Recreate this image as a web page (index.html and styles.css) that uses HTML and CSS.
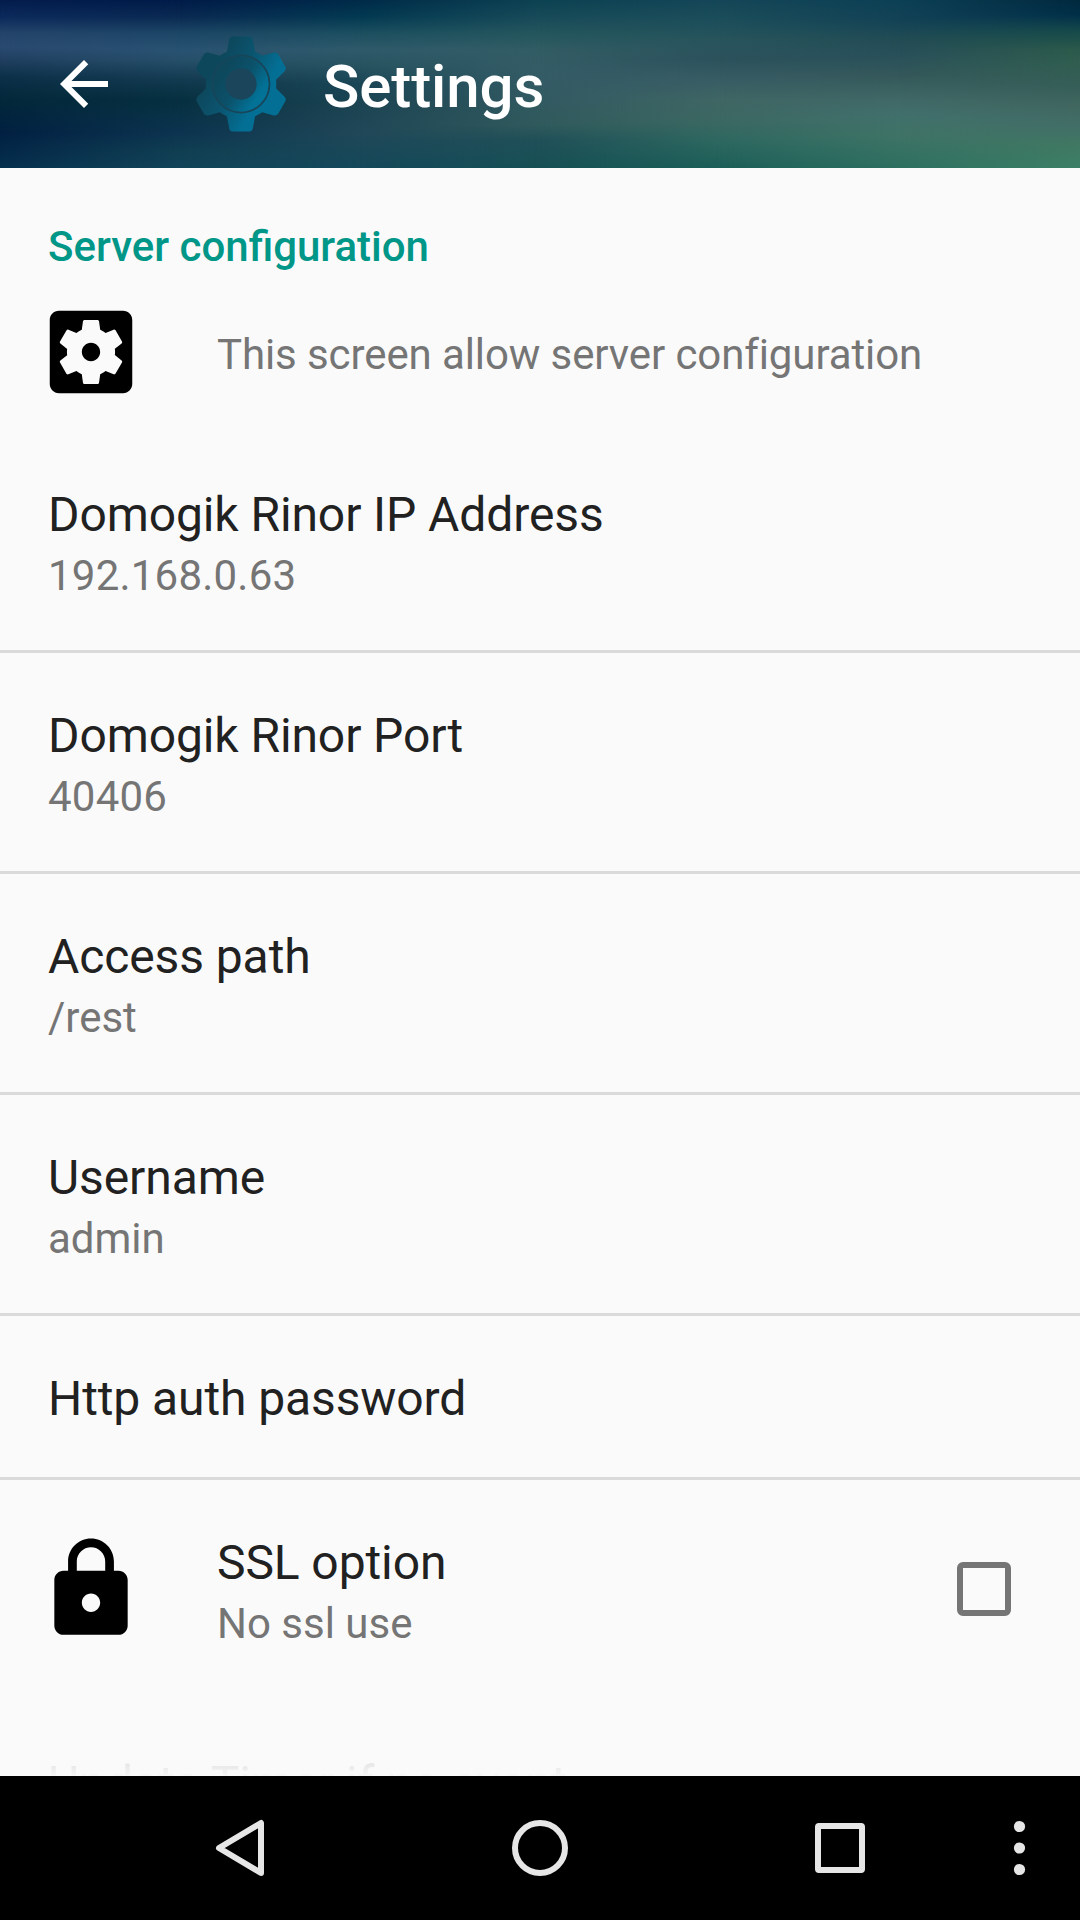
FILE: index.html
```
<!DOCTYPE html>
<html lang="en">
<head>
<meta charset="utf-8">
<title>Settings</title>
<link rel="stylesheet" href="styles.css">
</head>
<body>
<div class="screen">
  <header class="app-bar">
    <div class="aurora"><i class="band b0"></i><i class="band b1"></i><i class="band b2"></i><i class="band b3"></i><i class="band b4"></i><i class="band b5"></i><i class="band b6"></i></div>
    <svg class="back" viewBox="0 0 24 24"><path fill="#fff" d="M20 11H7.83l5.59-5.59L12 4l-8 8 8 8 1.41-1.41L7.83 13H20z"/></svg>
    <svg class="gear" viewBox="-50 -50 100 100">
      <defs>
        <linearGradient id="body" gradientUnits="userSpaceOnUse" x1="-28" y1="-16" x2="20" y2="12">
          <stop offset="0" stop-color="#0d475c"/><stop offset=".5" stop-color="#0b5570"/><stop offset="1" stop-color="#036f94"/>
        </linearGradient>
        <linearGradient id="ring" gradientUnits="userSpaceOnUse" x1="-18" y1="-12" x2="18" y2="12">
          <stop offset="0" stop-color="#0d485d"/><stop offset=".5" stop-color="#0b526b"/><stop offset="1" stop-color="#027297"/>
        </linearGradient>
        <clipPath id="cog">
          <circle r="36"/>
          <path d="M-15-30L-12-45.500Q-11.500-48.500-8.500-48.500H8.500Q11.500-48.500 12-45.500L15-30z"/>
          <path transform="rotate(60)" d="M-15-30L-11-45Q-10-48-7-48H7Q10-48 11-45L15-30z"/>
          <path transform="rotate(120)" d="M-15-30L-11-45Q-10-48-7-48H7Q10-48 11-45L15-30z"/>
          <path transform="rotate(180)" d="M-15-30L-12-45.500Q-11.500-48.500-8.500-48.500H8.500Q11.500-48.500 12-45.500L15-30z"/>
          <path transform="rotate(240)" d="M-15-30L-11-45Q-10-48-7-48H7Q10-48 11-45L15-30z"/>
          <path transform="rotate(300)" d="M-15-30L-11-45Q-10-48-7-48H7Q10-48 11-45L15-30z"/>
        </clipPath>
      </defs>
      <rect x="-50" y="-50" width="100" height="100" fill="url(#body)" clip-path="url(#cog)"/>
      <circle r="29" fill="none" stroke="#174559" stroke-width="2"/>
      <circle r="22" fill="none" stroke="url(#ring)" stroke-width="12"/>
      <circle r="16" fill="#1a455a"/>
    </svg>
    <h1 class="title">Settings</h1>
  </header>

  <main class="list">
    <h2 class="category">Server configuration</h2>
    <div class="row info">
      <svg class="icon" viewBox="0 0 24 24"><path fill-rule="evenodd" d="M12 10c-1.1 0-2 .9-2 2s.9 2 2 2 2-.9 2-2-.9-2-2-2zm7-7H5c-1.11 0-2 .9-2 2v14c0 1.1.89 2 2 2h14c1.11 0 2-.9 2-2V5c0-1.1-.89-2-2-2zm-1.75 9c0 .23-.02.46-.05.68l1.48 1.16c.13.11.17.3.08.45l-1.4 2.42c-.09.15-.27.21-.43.15l-1.74-.7c-.36.28-.76.51-1.18.69l-.26 1.85c-.03.17-.18.3-.35.3h-2.8c-.17 0-.32-.13-.35-.29l-.26-1.85c-.43-.18-.82-.41-1.18-.69l-1.74.7c-.16.06-.34 0-.43-.15l-1.4-2.42c-.09-.15-.05-.34.08-.45l1.48-1.16c-.03-.23-.05-.46-.05-.69 0-.23.02-.46.05-.68l-1.48-1.16c-.13-.11-.17-.3-.08-.45l1.4-2.42c.09-.15.27-.21.43-.15l1.74.7c.36-.28.76-.51 1.18-.69l.26-1.85c.03-.17.18-.3.35-.3h2.8c.17 0 .32.13.35.29l.26 1.85c.43.18.82.41 1.18.69l1.74-.7c.16-.06.34 0 .43.15l1.4 2.42c.09.15.05.34-.08.45l-1.48 1.16c.03.23.05.46.05.69z"/></svg>
      <p class="summary">This screen allow server configuration</p>
    </div>
    <div class="row"><div><p class="name">Domogik Rinor IP Address</p><p class="summary numeric">192.168.0.63</p></div></div>
    <div class="row"><div><p class="name">Domogik Rinor Port</p><p class="summary numeric">40406</p></div></div>
    <div class="row"><div><p class="name">Access path</p><p class="summary">/rest</p></div></div>
    <div class="row"><div><p class="name">Username</p><p class="summary">admin</p></div></div>
    <div class="row short"><div><p class="name">Http auth password</p></div></div>
    <div class="row last">
      <svg class="icon lock" viewBox="0 0 24 24"><path fill-rule="evenodd" d="M18 8h-1V6c0-2.76-2.24-5-5-5S7 3.24 7 6v2H6c-1.1 0-2 .9-2 2v10c0 1.1.9 2 2 2h12c1.1 0 2-.9 2-2V10c0-1.1-.9-2-2-2zM12 17c-1.1 0-2-.9-2-2s.9-2 2-2 2 .9 2 2-.9 2-2 2zM15.1 8H8.9V6c0-1.71 1.39-3.1 3.1-3.1s3.1 1.39 3.1 3.1z"/></svg>
      <div class="grow"><p class="name">SSL option</p><p class="summary">No ssl use</p></div>
      <span class="checkbox"></span>
    </div>
    <div class="row fading"><p class="name">Update Timer if no event</p></div>
  </main>

  <nav class="nav-bar">
    <svg viewBox="0 0 1080 144" fill="none" stroke="#e6e6e6" stroke-width="6" stroke-linejoin="round">
      <path d="M219 72L261 47V97z"/>
      <circle cx="540" cy="72" r="25"/>
      <rect x="818" y="50" width="44" height="44" rx="1"/>
      <g fill="#e6e6e6" stroke="none"><circle cx="1019.5" cy="50.500" r="5.600"/><circle cx="1019.5" cy="72" r="5.600"/><circle cx="1019.5" cy="93.500" r="5.600"/></g>
    </svg>
  </nav>
</div>
</body>
</html>
```
FILE: styles.css
```
* { box-sizing: border-box; margin: 0; padding: 0; }
body { font-family: Roboto, "Liberation Sans", sans-serif; background: #fafafa; color: #212121; }
.screen { width: 1080px; height: 1920px; display: flex; flex-direction: column; overflow: hidden; }

.app-bar { height: 168px; flex: none; position: relative; display: flex; align-items: center; padding-left: 48px; }
.app-bar > * { position: relative; }
.app-bar .back { width: 72px; height: 72px; }
.app-bar .gear { width: 98px; height: 100px; margin-left: 72px; }
.app-bar .title { margin-left: 33px; padding-top: 6px; font-size: 60px; line-height: 72px; font-weight: 500; color: #fff; letter-spacing: -0.1px; }

/* Vertical colour bands, each fading in over the previous one */
.app-bar .aurora { position: absolute; inset: 0; display: grid; }
.band { grid-area: 1 / 1; }
.b0 { background: linear-gradient(#031c4c 0, #0c2a5c 17px, #24446a 33px, #2a4a70 47px, #203f60 60px, #0c3048 77px, #03283a 100px, #022042 133px, #06304e 168px); }
.b1 { background: linear-gradient(#001b48 0, #0a2a52 17px, #1c4666 33px, #285272 50px, #264f6a 60px, #123a50 80px, #063040 100px, #0c3450 133px, #103e52 150px, #124458 168px); mask-image: linear-gradient(90deg, transparent 0, #000 180px); }
.b2 { background: linear-gradient(#002a48 0, #033a52 17px, #1c4f60 33px, #2f5a6a 50px, #26525f 67px, #1a4656 84px, #1c4452 105px, #204858 133px, #14485a 168px); mask-image: linear-gradient(90deg, transparent 180px, #000 360px); }
.b3 { background: linear-gradient(#0c4252 0, #1a4c5a 20px, #23565c 33px, #325c64 50px, #345c66 75px, #325a62 100px, #305a5c 125px, #205058 140px, #165054 168px); mask-image: linear-gradient(90deg, transparent 360px, #000 540px); }
.b4 { background: linear-gradient(#144658 0, #1c4e5a 20px, #28545c 40px, #2c525c 60px, #385c64 80px, #3f6664 100px, #3c6862 120px, #2e6860 140px, #1c5f58 168px); mask-image: linear-gradient(90deg, transparent 540px, #000 720px); }
.b5 { background: linear-gradient(#0c4054 0, #134256 20px, #224c54 40px, #28505a 55px, #34585a 75px, #406866 100px, #41706c 115px, #3f7366 135px, #2d7060 168px); mask-image: linear-gradient(90deg, transparent 720px, #000 900px); }
.b6 { background: linear-gradient(#01283e 0, #002f48 15px, #14484a 30px, #2c5a4a 50px, #305e50 65px, #365e58 85px, #40665f 105px, #426e68 125px, #407862 145px, #3c8066 168px); mask-image: linear-gradient(90deg, transparent 900px, #000 1080px); }

.list { flex: 1; min-height: 0; overflow: hidden; }
.category { height: 108px; padding: 54px 48px 0; font-size: 42px; line-height: 50px; font-weight: 500; color: #009688; }
.row { height: 221px; padding: 55px 48px 0; border-bottom: 3px solid #dadada; display: flex; }
.name { font-size: 48px; line-height: 56px; letter-spacing: -0.1px; }
.summary { font-size: 42px; line-height: 54px; color: #757575; }
.name + .summary { margin-top: 6px; }
.numeric { letter-spacing: 0.22px; }
.icon { width: 110px; height: 110px; flex: none; margin: 0 71px 0 -12px; }
.info { height: 156px; padding-top: 21px; border: 0; }
.info .summary { padding-top: 31px; letter-spacing: -0.1px; }
.short { height: 164px; }
.last { border-color: transparent; }
.lock { margin-top: -1px; }
.grow { flex: 1; }
.checkbox { width: 54px; height: 54px; margin: 27px 21px 0 0; border: 6px solid #757575; border-radius: 6px; }
.fading { border: 0; height: 75px; }
.fading .name { color: #e6e6e6; mask-image: linear-gradient(#000 8px, transparent 22px); }

.nav-bar { height: 144px; flex: none; background: #000; }
.nav-bar svg { display: block; width: 1080px; height: 144px; }
```
